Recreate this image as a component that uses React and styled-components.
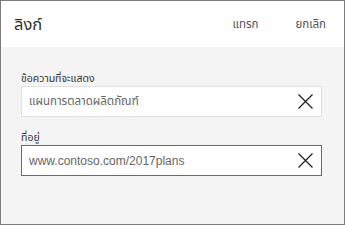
import React from 'react';
import styled, { createGlobalStyle } from 'styled-components';

const Global = createGlobalStyle`
  html, body { margin: 0; padding: 0; }
  body { font-family: "Liberation Sans", "Noto Sans", "Noto Sans Thai", sans-serif; }
`;

const Dialog = styled.div`
  box-sizing: border-box;
  width: 345px;
  height: 225px;
  border: 1px solid #7c7c7c;
  background: #f4f4f4;
  display: flex;
  flex-direction: column;
`;

const Header = styled.div`
  height: 46px;
  background: #fff;
  display: flex;
  align-items: center;
  padding: 0 18px 0 13px;
`;

const Title = styled.div`
  flex: 1;
  font-size: 16.5px;
  color: #333;
`;

const Action = styled.button`
  background: none;
  border: none;
  padding: 0;
  font: inherit;
  font-size: 11.5px;
  color: #555;
  margin-left: ${p => p.gap || 0}px;
`;

const Body = styled.div`
  padding: 24px 22px 0 20px;
  display: flex;
  flex-direction: column;
`;

const Label = styled.div`
  height: 14px;
  line-height: 14px;
  font-size: 10.5px;
  color: #333;
  margin-bottom: 1px;
`;

const Field = styled.div`
  box-sizing: border-box;
  height: 31px;
  background: #fff;
  border: 1px solid ${p => (p.focused ? '#6a6a6a' : '#e0e0e0')};
  display: flex;
  align-items: center;
  padding: 0 8px 0 7px;
  margin-bottom: ${p => p.mb || 0}px;
`;

const Value = styled.div`
  flex: 1;
  font-size: ${p => p.size || 12}px;
  color: #666;
`;

const Clear = () => (
  <svg width="15" height="15" viewBox="0 0 15 15">
    <path d="M0.5 0.5 L14.5 14.5 M14.5 0.5 L0.5 14.5" stroke="#222" strokeWidth="1.3" fill="none" />
  </svg>
);

export default function App() {
  return (
    <>
      <Global />
      <Dialog>
        <Header>
          <Title>ลิงก์</Title>
          <Action>แทรก</Action>
          <Action gap={37}>ยกเลิก</Action>
        </Header>
        <Body>
          <Label>ข้อความที่จะแสดง</Label>
          <Field mb={13}>
            <Value size={11.5}>แผนการตลาดผลิตภัณฑ์</Value>
            <Clear />
          </Field>
          <Label>ที่อยู่</Label>
          <Field focused>
            <Value>www.contoso.com/2017plans</Value>
            <Clear />
          </Field>
        </Body>
      </Dialog>
    </>
  );
}
